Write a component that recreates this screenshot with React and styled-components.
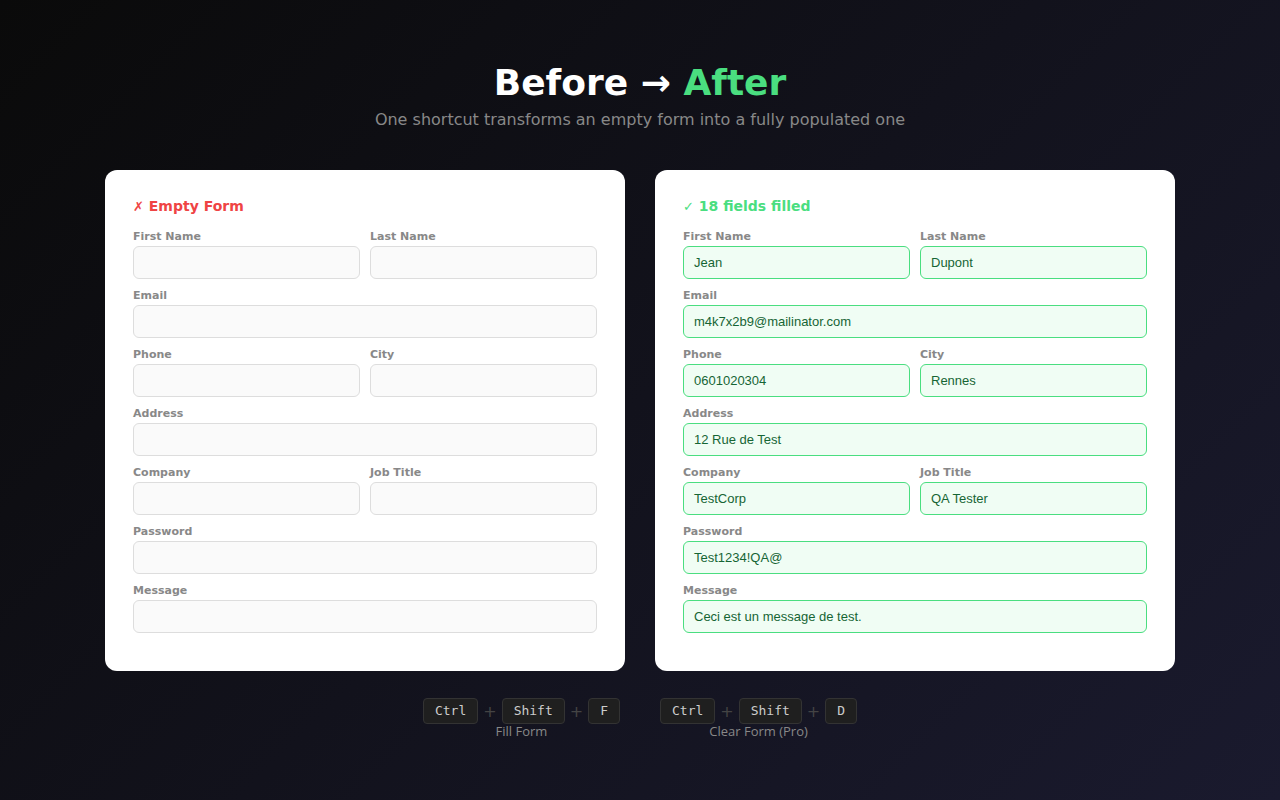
import React from "react";
import styled, { createGlobalStyle } from "styled-components";

const Global = createGlobalStyle`
  html, body { margin: 0; padding: 0; }
  body {
    min-height: 800px;
    background: linear-gradient(135deg, #0a0a0a 0%, #1a1a2e 100%);
    font-family: "DejaVu Sans", sans-serif;
  }
`;

const Page = styled.div`
  width: 1280px;
  height: 800px;
  box-sizing: border-box;
  padding-top: 61px;
  display: flex;
  flex-direction: column;
  align-items: center;
`;

const Title = styled.h1`
  margin: 0;
  font-size: 36px;
  line-height: 44px;
  font-weight: 700;
  color: #ffffff;
`;

const Accent = styled.span`
  color: #4ade80;
`;

const Subtitle = styled.p`
  margin: 5px 0 0;
  font-size: 16px;
  line-height: 20px;
  color: #888888;
`;

const Cards = styled.div`
  margin-top: 40px;
  display: flex;
  gap: 30px;
`;

const Card = styled.div`
  width: 520px;
  box-sizing: border-box;
  background: #ffffff;
  border-radius: 12px;
  padding: 27px 28px 38px;
`;

const CardHead = styled.div`
  font-size: 14px;
  line-height: 18px;
  font-weight: 700;
  color: ${(p) => (p.$ok ? "#4ade80" : "#ef4444")};
  margin-bottom: 14px;
`;

const Mark = styled.span`
  font-weight: 400;
  font-size: 13px;
`;

const Grid = styled.div`
  display: grid;
  grid-template-columns: 1fr 1fr;
  column-gap: 10px;
  row-gap: 10px;
`;

const Field = styled.div`
  grid-column: ${(p) => (p.$full ? "1 / -1" : "auto")};
  display: flex;
  flex-direction: column;
`;

const Label = styled.label`
  font-size: 11px;
  line-height: 13px;
  font-weight: 700;
  color: #888888;
  margin-bottom: 3px;
`;

const Input = styled.div`
  height: 33px;
  box-sizing: border-box;
  border-radius: 6px;
  border: 1px solid ${(p) => (p.$filled ? "#4ade80" : "#dddddd")};
  background: ${(p) => (p.$filled ? "#f0fdf4" : "#fafafa")};
  padding: 0 10px;
  display: flex;
  align-items: center;
  font-family: "Liberation Sans", Arial, sans-serif;
  font-size: 13px;
  color: #166534;
`;

const Shortcuts = styled.div`
  margin-top: 27px;
  display: flex;
  gap: 40px;
`;

const Shortcut = styled.div`
  display: flex;
  flex-direction: column;
  align-items: center;
`;

const Keys = styled.div`
  display: flex;
  align-items: center;
`;

const Key = styled.kbd`
  font-family: "DejaVu Sans Mono", monospace;
  font-size: 13px;
  line-height: 16px;
  padding: 4px 11px;
  background: #1f1f1f;
  border: 1px solid #333333;
  border-radius: 4px;
  color: #cccccc;
`;

const Plus = styled.span`
  color: #444444;
  font-size: 16px;
  margin: 0 5px;
`;

const Hint = styled.div`
  font-family: "Open Sans", sans-serif;
  font-size: 13px;
  line-height: 14px;
  color: #888888;
  margin-top: 0;
`;

const fields = [
  { label: "First Name", value: "Jean" },
  { label: "Last Name", value: "Dupont" },
  { label: "Email", value: "m4k7x2b9@mailinator.com", full: true },
  { label: "Phone", value: "0601020304" },
  { label: "City", value: "Rennes" },
  { label: "Address", value: "12 Rue de Test", full: true },
  { label: "Company", value: "TestCorp" },
  { label: "Job Title", value: "QA Tester" },
  { label: "Password", value: "Test1234!QA@", full: true },
  { label: "Message", value: "Ceci est un message de test.", full: true },
];

function Form({ filled }) {
  return (
    <Card>
      <CardHead $ok={filled}>
        <Mark>{filled ? "✓" : "✗"}</Mark> {filled ? "18 fields filled" : "Empty Form"}
      </CardHead>
      <Grid>
        {fields.map((f) => (
          <Field key={f.label} $full={f.full}>
            <Label>{f.label}</Label>
            <Input $filled={filled}>{filled ? f.value : ""}</Input>
          </Field>
        ))}
      </Grid>
    </Card>
  );
}

function Combo({ keys, hint }) {
  return (
    <Shortcut>
      <Keys>
        {keys.map((k, i) => (
          <React.Fragment key={k}>
            {i > 0 && <Plus>+</Plus>}
            <Key>{k}</Key>
          </React.Fragment>
        ))}
      </Keys>
      <Hint>{hint}</Hint>
    </Shortcut>
  );
}

export default function App() {
  return (
    <>
      <Global />
      <Page>
        <Title>
          Before → <Accent>After</Accent>
        </Title>
        <Subtitle>One shortcut transforms an empty form into a fully populated one</Subtitle>
        <Cards>
          <Form filled={false} />
          <Form filled={true} />
        </Cards>
        <Shortcuts>
          <Combo keys={["Ctrl", "Shift", "F"]} hint="Fill Form" />
          <Combo keys={["Ctrl", "Shift", "D"]} hint="Clear Form (Pro)" />
        </Shortcuts>
      </Page>
    </>
  );
}
